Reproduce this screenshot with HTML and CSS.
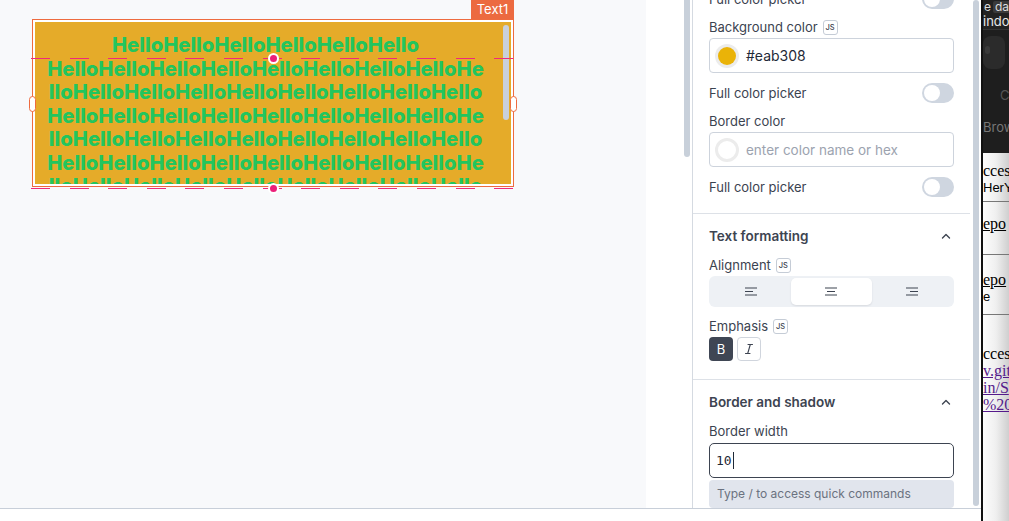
FILE: index.html
```html
<!DOCTYPE html>
<html>
<head>
<meta charset="utf-8">
<link rel="stylesheet" href="styles.css">
</head>
<body>
<div class="app">
  <div class="main">
    <div class="workspace">
      <div class="canvas">
        <div class="widget">
          <div class="widget-inner">
            <div class="wtext">
              <div class="wline">HelloHelloHelloHelloHelloHello</div>
              <div class="wline">HelloHelloHelloHelloHelloHelloHelloHelloHe</div>
              <div class="wline">lloHelloHelloHelloHelloHelloHelloHelloHello</div>
              <div class="wline">HelloHelloHelloHelloHelloHelloHelloHelloHe</div>
              <div class="wline">lloHelloHelloHelloHelloHelloHelloHelloHello</div>
              <div class="wline">HelloHelloHelloHelloHelloHelloHelloHelloHe</div>
              <div class="wline">lloHelloHelloHelloHelloHelloHelloHelloHello</div>
            </div>
            <div class="wscroll"></div>
          </div>
        </div>
        <div class="wlabel">Text1</div>
        <div class="dash dash-top"></div>
        <div class="dash dash-bottom"></div>
        <div class="dot dot-top"></div>
        <div class="dot dot-bottom"></div>
        <div class="handle handle-left"></div>
        <div class="handle handle-right"></div>
      </div>
      <div class="gutter"><div class="gutter-thumb"></div></div>
      <aside class="panel">
        <section class="section section-first">
          <div class="toggle-row first-toggle"><span>Full color picker</span><span class="toggle"><span class="knob"></span></span></div>
          <div class="label-row"><span>Background color</span><span class="js">JS</span></div>
          <div class="input color-input"><span class="swatch"><span class="swatch-fill"></span></span><span class="val">#eab308</span></div>
          <div class="toggle-row"><span>Full color picker</span><span class="toggle"><span class="knob"></span></span></div>
          <div class="label-row"><span>Border color</span></div>
          <div class="input color-input"><span class="swatch empty"></span><span class="ph">enter color name or hex</span></div>
          <div class="toggle-row"><span>Full color picker</span><span class="toggle"><span class="knob"></span></span></div>
        </section>
        <section class="section section-mid">
          <div class="head-row"><span class="title">Text formatting</span>
            <svg class="chev" width="10" height="6" viewBox="0 0 10 6"><path d="M1.5 5 L5 1.5 L8.5 5" fill="none" stroke="#3d4451" stroke-width="1.4" stroke-linecap="round" stroke-linejoin="round"/></svg>
          </div>
          <div class="label-row"><span>Alignment</span><span class="js">JS</span></div>
          <div class="seg">
            <div class="seg-item"><svg width="12" height="9" viewBox="0 0 12 9"><path d="M0 1H12M0 4.5H8M0 8H12" stroke="#3d4451" stroke-width="1.2"/></svg></div>
            <div class="seg-item active"><svg width="12" height="9" viewBox="0 0 12 9"><path d="M0 1H12M2 4.5H10M0 8H12" stroke="#3d4451" stroke-width="1.2"/></svg></div>
            <div class="seg-item"><svg width="12" height="9" viewBox="0 0 12 9"><path d="M0 1H12M4 4.5H12M0 8H12" stroke="#3d4451" stroke-width="1.2"/></svg></div>
          </div>
          <div class="label-row"><span>Emphasis</span><span class="js">JS</span></div>
          <div class="emph">
            <span class="ebtn bold">B</span>
            <span class="ebtn ital"><svg width="10" height="12" viewBox="0 0 10 12"><path d="M4 1.5H8.5M1.5 10.5H6M6.3 1.5L3.7 10.5" fill="none" stroke="#3d4451" stroke-width="1.1" stroke-linecap="round"/></svg></span>
          </div>
        </section>
        <section class="section section-last">
          <div class="head-row"><span class="title">Border and shadow</span>
            <svg class="chev" width="10" height="6" viewBox="0 0 10 6"><path d="M1.5 5 L5 1.5 L8.5 5" fill="none" stroke="#3d4451" stroke-width="1.4" stroke-linecap="round" stroke-linejoin="round"/></svg>
          </div>
          <div class="label-row"><span>Border width</span></div>
          <div class="input focus"><span class="mono">10</span><span class="caret"></span></div>
          <div class="hint">Type / to access quick commands</div>
        </section>
      </aside>
      <div class="pscroll"><div class="pscroll-thumb"></div></div>
    </div>
    <div class="footer"></div>
  </div>
  <div class="strip">
    <div class="strip-top">
      <div class="st-row1"><span class="st-e">e</span><span class="st-tag">dal</span></div>
      <div class="st-win">indow</div>
      <div class="st-area">
        <div class="st-box"><span class="st-dot"></span></div>
        <div class="st-c">C</div>
        <div class="st-brow">Brow</div>
      </div>
    </div>
    <div class="strip-bottom">
      <div class="sb s1">cces</div>
      <div class="sb sans">HerY</div>
      <div class="sb-line"></div>
      <div class="sb link-b s3">epo</div>
      <div class="sb-line l2"></div>
      <div class="sb link-b s4">epo</div>
      <div class="sb sans">e</div>
      <div class="sb-line l3"></div>
      <div class="sb s5">cces</div>
      <div class="sb link">v.git</div>
      <div class="sb link">in/S</div>
      <div class="sb link">%20</div>
    </div>
  </div>
</div>
</body>
</html>
```

FILE: styles.css
```css
* { box-sizing: border-box; }
html, body { margin: 0; padding: 0; }
body {
  width: 1009px;
  height: 521px;
  overflow: hidden;
  font-family: Inter, "Noto Sans", sans-serif;
  background: #fff;
}
.app { display: flex; height: 521px; }
.main { width: 981px; display: flex; flex-direction: column; }
.workspace { height: 508px; display: flex; }
.footer { flex: 1; border-top: 1px solid #c8cfd9; background: #fff; }

/* canvas */
.canvas { width: 646px; background: #f8f9fb; position: relative; overflow: hidden; }
.widget {
  position: absolute;
  left: 32px; top: 19px;
  width: 482px; height: 168px;
  border: 1px solid #ee6b3f;
  padding: 2px;
  background: #fff;
}
.widget-inner {
  width: 100%; height: 100%;
  background: #e5ab29;
  overflow: hidden;
  position: relative;
}
.wtext {
  padding: 11px 27px 0 12px;
  color: #22c55e;
  font-weight: 800;
  font-size: 20.2px;
  line-height: 23.5px;
  text-align: center;
}
.wline { white-space: nowrap; }
.wscroll {
  position: absolute;
  left: 468px; top: 3px;
  width: 6px; height: 95px;
  border-radius: 3px;
  background: #c9d0da;
}
.wlabel {
  position: absolute;
  left: 471px; top: 0;
  width: 43px; height: 19px;
  background: #ec6a40;
  color: #fff;
  font-size: 13px;
  line-height: 19px;
  text-align: center;
}
.dash {
  position: absolute;
  left: 31px; width: 484px; height: 1px;
  background: repeating-linear-gradient(90deg, #ee2a7b 0 19px, transparent 19px 38.6px);
}
.dash-top { top: 57.5px; }
.dash-bottom { top: 187.5px; }
.dot {
  position: absolute;
  width: 11px; height: 11px;
  border-radius: 50%;
  background: #ec1f7a;
  border: 2px solid #fff;
  left: 267.5px;
}
.dot-top { top: 52.5px; }
.dot-bottom { top: 182.5px; }
.handle {
  position: absolute;
  top: 96px;
  width: 7px; height: 16px;
  border-radius: 4px;
  background: #fff;
  border: 1px solid #ee6b3f;
}
.handle-left { left: 29px; }
.handle-right { left: 509.5px; }

/* gutter */
.gutter { width: 46px; background: #fff; }
.gutter-thumb {
  margin-left: 38px;
  width: 6px; height: 157px;
  background: #c8d0da;
  border-radius: 0 0 3px 3px;
}

/* panel */
.panel {
  width: 278px;
  border-left: 1px solid #d5dae1;
  background: #fff;
  overflow: hidden;
  color: #3b4350;
  font-size: 13px;
}
.section { padding: 0 16px; border-bottom: 1px solid #dde1e7; display: flex; flex-direction: column; }
.section-first { padding-bottom: 16px; }
.section-mid { padding-bottom: 18px; }
.section-last { border-bottom: none; }
.toggle-row {
  height: 20px;
  margin-top: 10px;
  display: flex;
  align-items: center;
  justify-content: space-between;
}
.first-toggle { margin-top: -11px; }
.toggle {
  width: 32px; height: 20px;
  border-radius: 10px;
  background: #cfd6e0;
  display: flex;
  align-items: center;
  padding: 2px;
}
.knob { width: 16px; height: 16px; border-radius: 50%; background: #fff; }
.label-row {
  height: 20px;
  margin-top: 8px;
  display: flex;
  align-items: center;
  gap: 5px;
}
.section-mid .label-row, .section-last .label-row { margin-top: 9px; }
.js {
  width: 15px; height: 15px;
  border: 1px solid #c5ccd6;
  border-radius: 3px;
  font-size: 7.5px;
  font-weight: 500;
  line-height: 13px;
  text-align: center;
  color: #3d4451;
}
.input {
  margin-top: 1px;
  height: 35px;
  border: 1px solid #cdd3dc;
  border-radius: 4px;
  display: flex;
  align-items: center;
}
.color-input { padding-left: 5px; gap: 7px; }
.swatch {
  width: 24px; height: 24px;
  border-radius: 50%;
  background: #ececec;
  display: flex;
  align-items: center;
  justify-content: center;
}
.swatch.empty { background: #fff; border: 3px solid #ececec; }
.swatch-fill { width: 18px; height: 18px; border-radius: 50%; background: #eab308; }
.val { font-size: 14px; color: #1f2937; }
.ph { font-size: 13.5px; color: #9ca3af; }

.head-row {
  margin-top: 12px;
  height: 20px;
  display: flex;
  align-items: center;
  justify-content: space-between;
  padding-right: 3px;
}
.title { font-size: 13.5px; font-weight: 600; color: #3d4451; }

.seg {
  margin-top: 1px;
  height: 31px;
  background: #eef1f5;
  border-radius: 6px;
  padding: 2px;
  display: flex;
}
.seg-item {
  flex: 1;
  display: flex;
  align-items: center;
  justify-content: center;
  border-radius: 5px;
}
.seg-item.active { background: #fff; box-shadow: 0 1px 2px rgba(16, 24, 40, 0.1); }

.emph { margin-top: 1px; display: flex; gap: 4px; }
.ebtn {
  width: 24px; height: 24px;
  border-radius: 4px;
  display: flex;
  align-items: center;
  justify-content: center;
}
.ebtn.bold { background: #3f4654; color: #fff; font-size: 13px; }
.ebtn.ital { border: 1px solid #d0d5dd; }

.input.focus { margin-top: 2px; border-color: #3d4451; border-radius: 5px; padding-left: 6px; }
.mono { font-family: "DejaVu Sans Mono", "Liberation Mono", monospace; font-size: 13px; color: #1f2937; }
.caret { width: 1px; height: 17px; background: #1f2937; margin-left: 1px; }
.hint {
  margin-top: 2px;
  height: 28px;
  background: #e1e5ed;
  border-radius: 4px;
  font-size: 12px;
  color: #6b7280;
  line-height: 28px;
  padding-left: 8px;
}

.pscroll { width: 11px; background: #fff; }
.pscroll-thumb { margin-left: 3px; width: 6px; height: 506px; border-radius: 3px; background: #c8d0da; }

/* right strip */
.strip {
  width: 28px;
  border-left: 2px solid #111;
  display: flex;
  flex-direction: column;
  overflow: hidden;
}
.strip-top { height: 153px; background: #222; display: flex; flex-direction: column; }
.st-row1 { height: 13px; display: flex; align-items: center; gap: 2px; font-size: 12px; color: #ddd; }
.st-e { padding-left: 1px; }
.st-tag { background: #3a3a3a; padding: 0 2px; border-radius: 2px; line-height: 12px; }
.st-win { height: 17px; font-size: 13px; line-height: 17px; color: #e8e8e8; border-bottom: 1px solid #333; }
.st-area { flex: 1; background: #1e1e1e; display: flex; flex-direction: column; }
.st-box { margin-top: 6px; width: 22px; height: 33px; border-radius: 8px; background: #2b2b2b; position: relative; }
.st-dot { position: absolute; left: 2px; top: 10px; width: 5px; height: 8px; border-radius: 3px; background: #3a3a3a; }
.st-c { margin-top: 18px; padding-left: 17px; font-size: 13px; color: #555; }
.st-brow { margin-top: 16px; font-size: 13px; color: #777; }
.strip-bottom {
  flex: 1;
  background: linear-gradient(90deg, #fdfdfd 0%, #efefef 50%, #cfcfcf 100%);
  font-family: "Liberation Serif", serif;
  font-size: 16px;
  color: #000;
  display: flex;
  flex-direction: column;
}
.sb { line-height: 17px; white-space: nowrap; }
.s1 { margin-top: 9px; }
.sans { font-family: "Liberation Sans", sans-serif; font-size: 13px; line-height: 17px; }
.sb-line { margin-top: 5px; height: 1px; background: #777; }
.link-b { text-decoration: underline; }
.s3 { margin-top: 13px; }
.l2 { margin-top: 22px; }
.s4 { margin-top: 16px; }
.l3 { margin-top: 9px; }
.s5 { margin-top: 30px; }
.link { color: #551a8b; text-decoration: underline; }
```
